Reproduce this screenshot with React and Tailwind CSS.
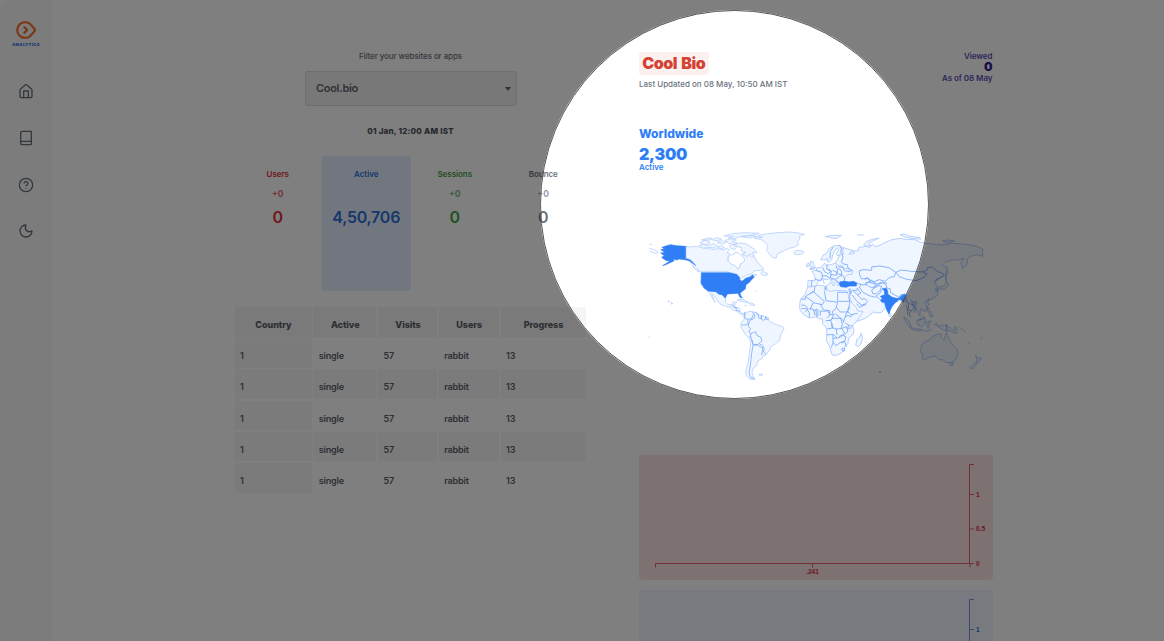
import { Book, CircleHelp, Moon } from 'lucide-react';

const stats = [
  { label: 'Users', delta: '+0', value: '0', color: 'text-[#dc2f3c]', box: '' },
  { label: 'Active', delta: '', value: '4,50,706', color: 'text-[#2f6fd6]', box: 'bg-[#e4eeff]' },
  { label: 'Sessions', delta: '+0', value: '0', color: 'text-[#43a047]', box: '' },
  { label: 'Bounce', delta: '+0', value: '0', color: 'text-[#6b7280]', box: '' },
];

const columns = ['Country', 'Active', 'Visits', 'Users', 'Progress'];
const cells = ['1', 'single', '57', 'rabbit', '13'];
const grid = 'grid grid-cols-[77px_63px_59px_60px_85px] gap-x-[1.75px]';

function Sidebar() {
  return (
    <aside className="flex h-[641px] w-[52px] shrink-0 flex-col items-center rounded-tl-lg bg-[#f9f9f9] pt-5 text-[#66707a]">
      <svg width="22" height="20" viewBox="0 0 22 20" fill="none" stroke="#f97332" strokeWidth="2.3" strokeLinejoin="round" strokeLinecap="round">
        <path d="M10.200 2.100A8 7.900 0 1 0 10.200 17.900c2.100 0 3.900-.8 5.300-2.200l3.700-4.200c.8-.9.8-2.100 0-3l-3.700-4.200C14.100 2.900 12.300 2.100 10.200 2.100z" />
        <path d="M9.300 7.200l2.900 2.800-2.900 2.800" />
      </svg>
      <div className="mt-[2px] h-[5px] text-[4px] leading-[5px] font-black tracking-[0.4px] text-[#2f6fe8]">ANALYTICS</div>
      <svg className="mt-9" width="16" height="16" viewBox="0 0 24 24" fill="none" stroke="currentColor" strokeWidth="2" strokeLinejoin="round" strokeLinecap="round">
        <path d="M3 10.500a2 2 0 0 1 .8-1.600l7-6a2 2 0 0 1 2.400 0l7 6a2 2 0 0 1 .8 1.600V20a2 2 0 0 1-2 2H5a2 2 0 0 1-2-2z" />
        <path d="M8.500 22V12h7v10" />
      </svg>
      <Book size={16} strokeWidth={2} className="mt-[31px]" />
      <CircleHelp size={16} strokeWidth={1.9} className="mt-[31px]" />
      <Moon size={16} strokeWidth={2} className="mt-[30px]" />
    </aside>
  );
}

function Filters() {
  return (
    <section className="flex w-[352px] shrink-0 flex-col pt-[50px]">
      <div className="h-[21px] text-center text-[8px] leading-[12px] font-medium tracking-[-0.1px] text-[#6b727c]">Filter your websites or apps</div>
      <div className="flex h-[35px] w-[212px] items-center justify-between self-center rounded-[2px] border border-[#dedede] bg-[#f1f1f1] pr-[5px] pl-[10.5px]">
        <span className="text-[11px] font-semibold tracking-[-0.3px] text-[#5f6670]">Cool.bio</span>
        <span className="h-0 w-0 border-x-[3.5px] border-t-[4px] border-x-transparent border-t-[#5f6670]" />
      </div>
      <div className="mt-[19px] h-[31px] text-center text-[8px] leading-[12px] font-extrabold tracking-[0.22px] text-[#4b525c]">01 Jan, 12:00 AM IST</div>
      <div className="-ml-px grid h-[135px] w-[354px] grid-cols-4">
        {stats.map((s) => (
          <div key={s.label} className={'flex flex-col items-center rounded-[3px] pt-3 ' + s.color + ' ' + s.box}>
            <div className="h-5 text-[8px] leading-[12px] font-semibold tracking-[-0.05px]">{s.label}</div>
            <div className="h-[17px] text-[8.5px] leading-[12px] font-bold opacity-70">{s.delta}</div>
            <div className="text-[16px] leading-[24px] font-semibold tracking-[-0.25px]">{s.value}</div>
          </div>
        ))}
      </div>
      <div className="mt-4 flex flex-col gap-[1.7px]">
        <div className={grid}>
          {columns.map((c) => (
            <div key={c} className="h-[29.6px] bg-[#f5f5f5] pt-[3px] pl-px text-center text-[9px] leading-[30px] font-extrabold tracking-[-0.05px] text-[#596069]">{c}</div>
          ))}
        </div>
        {[0, 1, 2, 3, 4].map((r) => (
          <div key={r} className={grid}>
            {cells.map((c, i) => (
              <div key={c} className={'h-[29.5px] pt-[3px] pl-[5.5px] text-[9px] leading-[30.4px] font-semibold tracking-[-0.15px] text-[#596069] ' + (i === 0 || r % 2 === 1 ? 'bg-[#f7f7f7]' : '')}>{c}</div>
            ))}
          </div>
        ))}
      </div>
    </section>
  );
}

function WorldMap() {
  return (
    <svg className="ml-px block shrink-0" width="352" height="170" viewBox="0 0 352 170" strokeLinejoin="round">
      <g transform="scale(.33333)" fill="#f0f6ff" stroke="#b9d2fc" strokeWidth="2.6">
        <path d="M137 79l13 2 18-2 18 3 19 4 17 2 16-2 12 4 12-6 6 6-6 8 8 4-6 8-1 12 9 9 14 2 7 12 6-2 0-10 9-8-5-10 3-12 10-8 10 8 8 9 9-3 7 14 12 14 9 10-10 4-16 1-12 9 4 4 13-2-8 8-10-1-4-8-8 3-14 8-12 6-6-12-8-7-24-6h-82l-8-5-6-10-10-12-10-11-13-3z" />
        <path d="M265 112l8-7 9-2 4-7 10 3 8 8 11 10-4 10-10 5-4 12-4 4-6-10-13-6-9-8z" fill="white" />
        <path d="M343 54l25-2-16-5 28-5 30-4 40-2 20 2 24 5-16 5 2 8-8 12 4 6-14 8-12 2-20 9-18 9-4 13-10-3-12-12-6-12 4-10-8-10-10-8z" />
        <path d="M461 97l9-6 18 2 2 6-11 5-15-1zM362 160l7-9 4 7 9 1-2 8-14-2z" />
        <path d="M180 68l15-7 11 2 4 7-16 5zM178 76l14-3 16 4 12-6 10 5-7 8-20-2-14 3zM185 60l18-6 13 1-8 5zM214 59l18-6 12 4-13 6zM231 68l14-6 14 4-8 6zM230 80l15-3 8 6-11 3zM252 48l26-7 38-3 42 2-28 7-28 2-20 7-17-2 15-5zM256 61l18-5 15 4-13 5 16 4-10 5-18-5zM268 78l10-5 12 7-5 8-12-2zM286 73l16-4 18 3 11 8 10 6 10 12-13-1 4 10-14-5-6 8-16-7 12-6-15-5 3-8-18-6zM304 50l25-4 22 3-25 5z" />
        <path d="M28 73h8M28 86l12 2 14 7-4 6-11-4-11-3M159 137l5 9M171 144l7 14" fill="none" />
        <path d="M204 213l24 2 8 7 10 2 10 10 2 14 6 6 12 0 4-8 10 0-6 10-8 7-16-3-18-7-8-10-12-16-8-8 7 18 5 11-9-14z" />
        <path d="M270 262l8-8 10 8 10 2 2 12 9 5 9-5-6 10-12-4-11-9-9-2z" />
        <path d="M291 240l18-2 17 10-13-2zM326 250l10-1 9 6-10 2zM305 231l5 6M313 256l7 1M346 212l3 2" />
        <path d="M316 278l14-4 16 3 16 9 22 6 4 12 20 10 20 6 4 8-10 16-4 18-12 10-12 6-6 14-12 14-8 0-2 10-12 6-4 14-10 8-4 14 4 14 6 6-16 0-12-12 0-16 6-20 4-30 4-28-2-14-14-14-14-24 2-12 10-12z" />
        <path d="M356 464l8-2 5 2-7 3z" />
        <path d="M84 244l5 0M92 248l5 2-2 3M28 350v3" stroke="#8ab4fa" />
        <path d="M314 278l-2 15 11 5 2 14-14 4-7-2M323 298l12-2 5-13M338 276l7 10-4 10-10 4-3 8M346 277l8 5 2 12 8 2 2-10M364 286l-1 11 7 4 7-4-1-7M377 290l4 10 5-5M327 308l-2 12 7 6-6 10 7 5-4 13M333 341l14-6 4 12 11 4 4 12-10 8-5 5-11-3-5-11-3-15M336 358l3 18-4 24-4 36-4 24 5 13 11 2M357 371l11 6 5 9-3 10 9 7M340 376l11-3 8 7 9 3-1 12-3 10M278 254l3 8 9 1M288 262l1 9 10 3" fill="none" stroke="#75a7fa" strokeWidth="2.300" />
        <path d="M66 82l14-5 12-3 18 3 27 2v37l13 3 10 9 7 9-7-6-12-9-14-3-16-2-8 3-10-3 2 6-12 5-10 5-12 4 14-9 8-5-10-1-9-5-6-5 8-5-11-8 13-2-13-8 10-1zM184 158H266L290 163 298 171 300 180 306 184 318 174 332 170 338 164 342 172 334 180 327 188 318 194 316 207 304 216 300 221 306 234 300 232 294 220 276 221 262 222 256 234 246 224 236 222 228 215 204 213 192 204 183 190z" fill="#2f7ef6" stroke="#2f7ef6" strokeWidth="1.800" />
      </g>
      <g transform="translate(150 0) scale(.33333)" fill="#f0f6ff" stroke="#acc9fb" strokeWidth="2.6">
        <path d="M106 50l18-4 30 0-7 5-9 5-15-2-3-3zM202 45h20M221 74l8-9 15-6 23-5-14 7-18 9 8 7-16 1zM331 44l12-2 14 6 32 5 4 4-30-2-22-5zM458 62l16-2 20 3-13 4-20-1z" />
        <path d="M156 94l5-11 16 5 15 5 0 8-16 1 10-8 19-2 2-10 20-3 12 3 9-9 8 7 16-5 8-5 26-11 24-4 22 4 20-1 20 9 36 5 25 3 37-5 40 3 30 6 18 8v22l-17-5-16 4-13 8 0 16-14 14-5-17 9-15-14 6-24 0-19 7-8 8 15 8-2 14-8 11-13 5-8 10-9 4 8 9 5 13-3 17-14 11-16 4-8 7 6 11-1 14-10 1-5-9-4 10 0 14-9-12-4-18-8-4-22-9-28-9-21-2 7 13-9 9-12 8-9 12-11 2-14-3-11 10-13 9-25 9-8-17-13-17-10-20 2-17-21 1-16 2-8-7 5-5-10 1-5 7-7-1-6-15-12 2 5-13 15 1-5-8 17-11 2-13-5-9 5-17z" />
        <path d="M92 119l7-13 10-5 7-14 14-9 18-2 11 7-1 13 4 4-10 4-10 3-3-6 7-12-4-6-9 11-6 14-1 10-8 9-6-3 1-8-6 4z" />
        <path d="M66 154l13-3 1-7 13-2 7-8 4-5 3 7 14-2 17-4 7 7 13 1 2 8 11-1 17 10-3 9-12-1-8 10-2 12-10 5-5-5-4 6-7-9-9-4-10-2-6 3-10-1-8-2-9 6-2 6-5 10-14 6-11-3 1-19 21-1 0-12z" />
        <path d="M58 146l9-3 9 0-5 4-9 2 5-9-6-3 0-13 8 2 1 7 5 5-1 8zM50 133l7-4 1 9-8 3zM99 179l4 11-3-1M119 174l9 12 7 4-4 8-5-7-8-8M139 187l9 1-3 9-5-2" />
        <path d="M53 202L66 199 89 196 103 198 105 208 122 214 137 211 159 212 170 213 178 230 187 250 198 262 203 273 219 274 210 289 198 306 188 316 192 330 190 342 176 354 174 371 165 379 163 390 150 402 133 407 126 404 119 380 109 362 111 340 108 321 97 311 98 297 88 296 76 291 58 294 40 283 30 270 29 255 31 240 44 224z" />
        <path d="M197 376l4-19 10-7 2-10 5 13-6 20-8 6zM298 278l6 9-4 4-4-5z" />
        <path d="M470 148l5 8-6 10-1 17 8 12-14 13-12-2-10 5 2-8 18-5 10-10-4-17 2-10zM444 208l-5 8-4-9zM416 236l-3 13 4 6-5-8zM371 253l8-7 2 4-9 6zM412 257l6 13 6 7 5 14-9-3-3-10-6-8zM341 291l16 12 7 18-7-1-9-14zM362 323l15 3 12 1 11 3-8 3-28-5zM380 301l9-3 10-9 8 8-3 15-9 9-12-7zM410 307l9-4 6 1-10 5 4 7-4 10-4-9zM404 333l12-1 11-3M434 312l8-1 5 8 9-4 13 3 16 7 18 14-10 0-14-8-9 4-10-6-8-4-9-5zM490 319l9 3 4 7-10-2M507 320l15 12 7 7M534 365l8 6M570 357l7-5" />
        <path d="M394 374l13-9 14-7 8-10 13-6 12 0-1 10 9 8 7-22 7 18 10 16 14 14 4 15-7 16-9 10-18 1-12-9-12 0-10-11-18 4-14 7-7-3 0-11-5-13zM477 428l14 0-3 9-7 0zM555 405l11 10 8 0-9 13-6 0 2-11zM556 427l4 7-13 12-8-2zM267 455l6 0 0 3-5 0z" />
        <g fill="none" stroke="#75a7fa" strokeWidth="2.500">
          <path d="M156 100l3 13-5 12 6 7 12 2 2 10 15 9M148 76l6 10-2 14M130 81l-9 13-1 22M98 142l6 14 11 5 6-6-4-9M112 134l-2 13 15 7-4 9 18 3 2-9-13-6M125 162l-5 11 17 5 11-8 8-4-3-16-13-6-2-8M138 179l8 11 14-5 5-8-7-11M145 140l14 2 4 10 18 3M77 151l18 6 2 16-4 10M74 177l18 6M66 181l-3 20M118 173l-10-6-11 1M143 148l-2 13 15 4" />
          <path d="M207 153l12-4 26 2 0-10 24-3 28 5 20 14-4 13-14 2-13 12-18-5-18 7-17-12-18 3-6-12zM318 157l15-7 31 4 29 2 18-5 2-8 14-2 10 9 6 6 10 1 8 6-9 11-11 3-7 8M318 157l10 13 22 8 29 4 14-6 12-6 6-9-12-4M224 180l8-6 13 15 16 3 14-5 12 6M229 190l16-9 13 11-8 12-14-5-9-9M245 189l-12-3-9 5M249 203l16-9 15-7 11 3M249 222l-4-12 20-13 10 2-5 13-11 9zM269 238l-11-10 12-8 8-16M287 192l4 12 9 2 2 12 24 13 10-8 10 3 4 17" />
          <path d="M176 207l6 15 5-12 12 2 6-9M190 213l12 11 11-5-12-14M187 225l13 18 14 12 12-3 7-8-8-8-10 2-13-14M200 251l9 11 19-9M201 190l18 5 13-1M180 204v25M214 194l-6 7 10 15 19 11 20 5" />
          <path d="M75 199l-2 15-24 13M32 237l14 1 0-10M46 229l23 17M59 222l10-8 34 30-6 10-28-6-9 22M103 214l5 28 35 5v-30M108 198l-3 15M143 248l-6 19-11 8 5 9-12 0-6-13-12-1-10-17M143 217h29M176 229l4 19-7 23M145 244h34M139 262l12 14 21 0 8-15M34 255l11 1 9 10-9 11M34 265l16 1 8 12 0 14M59 266l12 2 3 17M71 273l8-5 5 0M78 269l1 21M84 270l-1 20M89 273l15 1 14-3 2 13-9 11M91 287l0-13M131 284l-7 16-11 2M107 302l15-1 4 10 3 13-18 3M135 281l17 13 5 18-4 14-14 1-13-4-2-13M125 295h29l7 9M174 272l-8 16-6 20M172 273l10 11 21-4M165 292l9-6 8 5 5-7M166 309l13 8 10 2M156 326l7 12-2 7-10 1-9 9-11-11-22 0M153 326l16-6 5 13-9 10M139 327l2 18M146 354l13-8 9 5-4 13-11 5M129 344v23l-5 16M129 366l8 11 15-10 12-3M142 354l-13 1M158 384l7 4-3 6-7-4zM164 364l5 17M176 315l-3 10 12-1" />
          <path d="M349 241l7 10-1 17 8 4 10-7-9-15M363 273l-6 9 4 10M365 247l9 10 3 10-7 10M361 241l11 6 6-2M348 254l5 16 0 13M385 301l12-3 8-6M470 312v20" />
        </g>
        <path d="M151 185l16-1 10 2 12-2 11 4-1 10-20 0-11 4-16-2-4-7z" fill="#2f7ef6" stroke="#2f7ef6" strokeWidth="1.800" />
        <path d="M284 206L294 204 299 212 300 223 313 232 326 235 334 234 340 227 350 222 355 226 350 238 345 248 340 240 333 238 330 242 320 250 312 260 307 270 303 282 297 272 293 262 289 246 283 248 277 240 283 236 277 229 290 224 289 214z" transform="translate(-6 0)" fill="#2f7ef6" stroke="#2f7ef6" strokeWidth="1.800" />
      </g>
    </svg>
  );
}

const yTicks = [
  { label: '1', y: 39.5 },
  { label: '0.5', y: 74 },
  { label: '0', y: 108.5 },
];

function Chart({ box, line, label, ticks, xLabel, height }) {
  return (
    <svg className={'block shrink-0 rounded-t-[4px] ' + box} width="353.500" height={height} viewBox={'0 0 353.5 ' + height}>
      <g className={line} fill="none" strokeWidth="1">
        <path d="M16.500 112.500v-4h314.500v4M173.500 108.500v4" />
        <path d="M335 9.500h-4.500v99h4.500M331 39.500h4M331 74h4" />
      </g>
      <g className={label} fontSize="6.500" fontWeight="700" fontFamily="Liberation Sans, Arial, sans-serif">
        {ticks.map((t) => (
          <text key={t.label} x="337" y={t.y + 2.3}>{t.label}</text>
        ))}
        {xLabel && <text x="173.500" y="119" textAnchor="middle">{xLabel}</text>}
      </g>
    </svg>
  );
}

function Report() {
  return (
    <section className="flex w-[353.5px] shrink-0 flex-col pt-[51px]">
      <div className="flex h-[75px] shrink-0 justify-between">
        <div>
          <div className="mt-px flex h-[23px] w-[69.5px] items-center justify-center rounded-[3px] bg-[#fdf1f0] pb-px text-[16px] font-black tracking-[-0.5px] text-[#d34234] [word-spacing:1.5px]">Cool Bio</div>
          <div className="mt-[3px] text-[8px] leading-[12px] font-medium text-[#6b7280]">Last Updated on 08 May, 10:50 AM IST</div>
        </div>
        <div className="text-right text-[8px] font-semibold tracking-[-0.05px] text-[#5951b5]">
          <div className="leading-[11px]">Viewed</div>
          <div className="text-[12px] leading-[10px] font-black text-[#2c248f]">0</div>
          <div className="leading-[12px]">As of 08 May</div>
        </div>
      </div>
      <div className="h-[94px] shrink-0 text-[#2f7ef6]">
        <div className="text-[12px] leading-[15px] font-extrabold">Worldwide</div>
        <div className="mt-[3px] text-[16px] leading-[20px] font-black tracking-[-0.25px]">2,300</div>
        <div className="-mt-px text-[8px] leading-[8px] font-semibold">Active</div>
      </div>
      <WorldMap />
      <div className="mt-[65px] flex shrink-0 flex-col gap-[10px]">
        <div className="overflow-hidden rounded-b-[4px]">
          <Chart box="bg-[#fde3e3]" line="stroke-[#e0606a]" label="fill-[#d32f3f]" ticks={yTicks} xLabel=".241" height={125} />
        </div>
        <Chart box="bg-[#f0f5ff]" line="stroke-[#7098dc]" label="fill-[#2f6fd6]" ticks={yTicks.slice(0, 1)} height={51} />
      </div>
    </section>
  );
}

export default function App() {
  return (
    <div className="relative flex h-[641px] w-[1164px] overflow-hidden bg-white font-[Inter,sans-serif]">
      <Sidebar />
      <main className="flex gap-[52.5px] pl-[182.5px]">
        <Filters />
        <Report />
      </main>
      <div className="pointer-events-none absolute top-[-1190px] left-[-660px] h-[2789px] w-[2789px] rounded-full border-[1200px] border-black/50" />
      <div className="pointer-events-none absolute top-[9.5px] left-[540px] h-[389px] w-[389px] rounded-full border border-[#555]" />
    </div>
  );
}
